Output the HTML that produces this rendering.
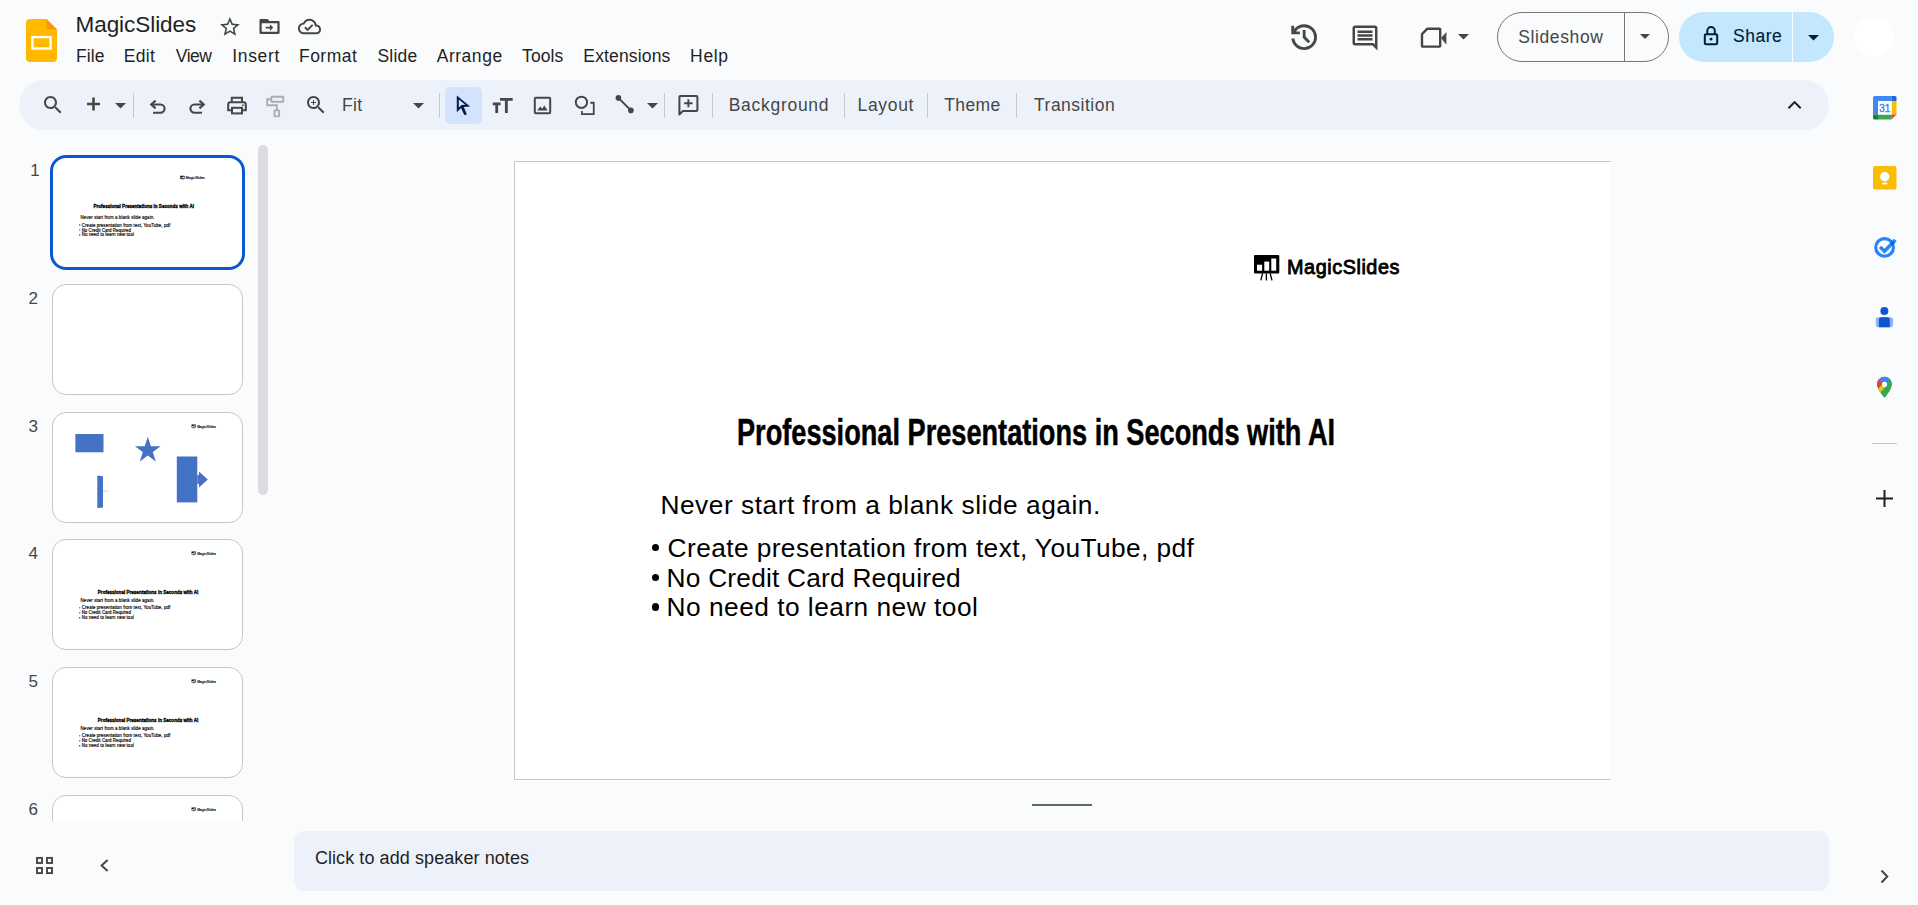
<!DOCTYPE html>
<html><head><meta charset="utf-8"><title>MagicSlides</title>
<style>
html,body{margin:0;padding:0;}
body{width:1918px;height:905px;overflow:hidden;position:relative;background:#f9fbfd;font-family:"Liberation Sans", sans-serif;}
.a{position:absolute;box-sizing:content-box;}
.t{position:absolute;white-space:nowrap;}
svg.a{overflow:visible;}
</style></head><body>
<svg class="a" style="left:26px;top:19px;" width="31" height="43" viewBox="0 0 31 43">
<path d="M4 0 H20.5 L31 10.5 V39 Q31 43 27 43 H4 Q0 43 0 39 V4 Q0 0 4 0Z" fill="#ffba00"/>
<path d="M20.5 0 L31 10.5 H20.5Z" fill="#ff9800"/>
<rect x="6.4" y="18.1" width="18.2" height="11.4" fill="none" stroke="#fff" stroke-width="2.3"/>
</svg>
<div class="t" style="left:75.5px;top:14.45px;font-size:22.5px;line-height:22.5px;color:#1f1f1f;letter-spacing:-0.055px;">MagicSlides</div>
<svg class="a" style="left:218.2px;top:14.5px;" width="23.8" height="23.8" viewBox="0 0 24 24"><path fill="#444746" d="M22 9.24l-7.19-.62L12 2 9.19 8.63 2 9.24l5.46 4.73L5.82 21 12 17.27 18.18 21l-1.63-7.03L22 9.24zM12 15.4l-3.76 2.27 1-4.28-3.32-2.88 4.38-.38L12 6.1l1.71 4.04 4.38.38-3.32 2.88 1 4.28L12 15.4z"/></svg>
<svg class="a" style="left:257px;top:16px;" width="25" height="20" viewBox="0 0 25 20"><path fill-rule="evenodd" fill="#444746" d="M3.6 2.9 H10.4 L12.6 5.1 H21.5 Q22.6 5.1 22.6 6.2 V16.8 Q22.6 17.9 21.5 17.9 H3.6 Q2.5 17.9 2.5 16.8 V4 Q2.5 2.9 3.6 2.9Z M4.7 7.3 H20.4 V15.7 H4.7Z"/><path fill="#444746" d="M8.7 10.7 H12.9 V8.3 L16.2 11.6 L12.9 14.9 V12.5 H8.7Z"/></svg>
<svg class="a" style="left:297px;top:14px;" width="25" height="25" viewBox="-1 -1 26 26"><path fill="#444746" d="M19.35 10.04C18.67 6.59 15.64 4 12 4 9.11 4 6.6 5.64 5.35 8.04 2.34 8.36 0 10.91 0 14c0 3.31 2.69 6 6 6h13c2.76 0 5-2.24 5-5 0-2.64-2.05-4.78-4.65-4.96zM19 18H6c-2.21 0-4-1.79-4-4 0-2.05 1.53-3.76 3.56-3.97l1.07-.11.5-.95C8.08 7.14 9.94 6 12 6c2.62 0 4.88 1.86 5.39 4.43l.3 1.5 1.53.11c1.56.1 2.78 1.41 2.78 2.96 0 1.65-1.35 3-3 3zm-9-3.82l-2.09-2.09L6.5 13.5 10 17l6.01-6.01-1.41-1.41z"/></svg>
<div class="t" style="left:75.9px;top:48.19px;font-size:17.5px;line-height:17.5px;color:#1f1f1f;letter-spacing:0.145px;">File</div>
<div class="t" style="left:123.7px;top:48.19px;font-size:17.5px;line-height:17.5px;color:#1f1f1f;letter-spacing:0.302px;">Edit</div>
<div class="t" style="left:175.8px;top:48.19px;font-size:17.5px;line-height:17.5px;color:#1f1f1f;letter-spacing:-0.492px;">View</div>
<div class="t" style="left:232.3px;top:48.19px;font-size:17.5px;line-height:17.5px;color:#1f1f1f;letter-spacing:0.659px;">Insert</div>
<div class="t" style="left:299px;top:48.19px;font-size:17.5px;line-height:17.5px;color:#1f1f1f;letter-spacing:0.468px;">Format</div>
<div class="t" style="left:377.5px;top:48.19px;font-size:17.5px;line-height:17.5px;color:#1f1f1f;letter-spacing:0.180px;">Slide</div>
<div class="t" style="left:436.7px;top:48.19px;font-size:17.5px;line-height:17.5px;color:#1f1f1f;letter-spacing:0.529px;">Arrange</div>
<div class="t" style="left:522.1px;top:48.19px;font-size:17.5px;line-height:17.5px;color:#1f1f1f;letter-spacing:0.074px;">Tools</div>
<div class="t" style="left:583.3px;top:48.19px;font-size:17.5px;line-height:17.5px;color:#1f1f1f;letter-spacing:0.161px;">Extensions</div>
<div class="t" style="left:690.1px;top:48.19px;font-size:17.5px;line-height:17.5px;color:#1f1f1f;letter-spacing:0.647px;">Help</div>
<svg class="a" style="left:1286.5px;top:20.1px;" width="34.3" height="34.3" viewBox="0 -960 960 960"><path fill="#444746" d="M480-120q-138 0-240.5-91.5T122-440h82q14 104 92.5 172T480-200q117 0 198.5-81.5T760-480q0-117-81.5-198.5T480-760q-69 0-129 32t-101 88h110v80H120v-240h80v94q51-64 124.5-99T480-840q75 0 140.5 28.5t114 77q48.5 48.5 77 114T840-480q0 75-28.5 140.5t-77 114q-48.5 48.5-114 77T480-120Zm112-192L440-464v-216h80v184l128 128-56 56Z"/></svg>
<svg class="a" style="left:1350.4px;top:22.5px;" width="30" height="30" viewBox="0 0 24 24"><path fill="#444746" d="M21.99 4c0-1.1-.89-2-1.99-2H4c-1.1 0-2 .9-2 2v12c0 1.1.9 2 2 2h14l4 4-.01-18zM20 4v13.17L18.83 16H4V4h16zM6 12h12v2H6zm0-3h12v2H6zm0-3h12v2H6z"/></svg>
<svg class="a" style="left:1418.6px;top:25.3px;" width="30" height="25" viewBox="0 0 30 25"><path d="M8.4 3.7 H20.6 Q21.2 3.7 21.2 4.3 V21 Q21.2 21.6 20.6 21.6 H3.6 Q3 21.6 3 21 V9.2Z" fill="none" stroke="#444746" stroke-width="2.4" stroke-linejoin="round"/><path d="M22 13 L27.4 7 V19.8Z" fill="#444746"/></svg>
<svg class="a" style="left:1457.6px;top:33.6px;" width="11" height="6" viewBox="0 0 11 6"><path d="M0 0 H11 L5.5 5.5Z" fill="#444746"/></svg>
<div class="a" style="left:1497px;top:12px;width:170px;height:48px;border:1.25px solid #747775;border-radius:25px;"></div>
<div class="a" style="left:1624px;top:13px;width:1.25px;height:48px;background:#747775;"></div>
<div class="t" style="left:1518.2px;top:29.29px;font-size:17.5px;line-height:17.5px;color:#444746;letter-spacing:0.621px;">Slideshow</div>
<svg class="a" style="left:1640px;top:34px;" width="10" height="5" viewBox="0 0 10 5"><path d="M0 0 H10 L5 5Z" fill="#444746"/></svg>
<div class="a" style="left:1679px;top:12px;width:155px;height:50px;border-radius:25px;background:#c2e7ff;"></div>
<div class="a" style="left:1792px;top:12px;width:1px;height:50px;background:#f9fbfd;"></div>
<svg class="a" style="left:1702px;top:24px;" width="18" height="22" viewBox="0 0 18 22"><path d="M5.3 10.3 V6.75 A3.75 3.75 0 0 1 12.8 6.75 V10.3" fill="none" stroke="#001d35" stroke-width="2"/><rect x="2.8" y="10.3" width="12.4" height="9.9" rx="1.3" fill="none" stroke="#001d35" stroke-width="2"/><circle cx="9" cy="15.2" r="1.4" fill="#001d35"/></svg>
<div class="t" style="left:1733.1px;top:28.09px;font-size:17.5px;line-height:17.5px;color:#001d35;-webkit-text-stroke:0.12px #001d35;letter-spacing:0.484px;">Share</div>
<svg class="a" style="left:1807.5px;top:34.5px;" width="11" height="6" viewBox="0 0 11 6"><path d="M0 0 H11 L5.5 5.5Z" fill="#001d35"/></svg>
<div class="a" style="left:1854px;top:17px;width:40px;height:40px;border-radius:50%;background:#fff;"></div>
<div class="a" style="left:19px;top:80px;width:1810px;height:50px;border-radius:25px;background:#edf2fa;"></div>
<svg class="a" style="left:40.8px;top:93px;" width="24" height="24" viewBox="0 0 24 24"><path fill="#444746" d="M15.5 14h-.79l-.28-.27C15.41 12.59 16 11.11 16 9.5 16 5.91 13.09 3 9.5 3S3 5.91 3 9.5 5.91 16 9.5 16c1.61 0 3.09-.59 4.23-1.57l.27.28v.79l5 4.99L20.49 19l-4.99-5zm-6 0C7.01 14 5 11.99 5 9.5S7.01 5 9.5 5 14 7.01 14 9.5 11.99 14 9.5 14z"/></svg>
<svg class="a" style="left:85px;top:95px;" width="17" height="17" viewBox="0 0 17 17"><path d="M8.5 2.5 V15.5 M2 9 H15" stroke="#444746" stroke-width="2.6"/></svg>
<svg class="a" style="left:115px;top:102.5px;" width="11" height="6" viewBox="0 0 11 6"><path d="M0 0 H11 L5.5 5.5Z" fill="#444746"/></svg>
<div class="a" style="left:133px;top:93px;width:1px;height:25px;background:#c7c7c7;"></div>
<div class="a" style="left:439px;top:93px;width:1px;height:25px;background:#c7c7c7;"></div>
<div class="a" style="left:664px;top:93px;width:1px;height:25px;background:#c7c7c7;"></div>
<div class="a" style="left:712px;top:93px;width:1px;height:25px;background:#c7c7c7;"></div>
<div class="a" style="left:844px;top:93px;width:1px;height:25px;background:#c7c7c7;"></div>
<div class="a" style="left:927px;top:93px;width:1px;height:25px;background:#c7c7c7;"></div>
<div class="a" style="left:1016px;top:93px;width:1px;height:25px;background:#c7c7c7;"></div>
<svg class="a" style="left:148px;top:97px;" width="20" height="18" viewBox="0 0 20 18"><path d="M3.2 7.5 H12.5 A4.1 4.1 0 0 1 12.5 15.7 H5" fill="none" stroke="#444746" stroke-width="2.1"/><path d="M7.6 3.6 L3.2 7.5 L7.6 11.4" fill="none" stroke="#444746" stroke-width="2.1"/></svg>
<svg class="a" style="left:187px;top:97px;" width="20" height="18" viewBox="0 0 20 18"><path d="M16.8 7.5 H7.5 A4.1 4.1 0 0 0 7.5 15.7 H15" fill="none" stroke="#444746" stroke-width="2.1"/><path d="M12.4 3.6 L16.8 7.5 L12.4 11.4" fill="none" stroke="#444746" stroke-width="2.1"/></svg>
<svg class="a" style="left:226px;top:96px;" width="22" height="19" viewBox="0 0 22 19"><path d="M5.8 5.8 V1.8 H16 V5.8" fill="none" stroke="#444746" stroke-width="2"/><path d="M5 14.2 H2.2 V8.4 Q2.2 6.3 4.3 6.3 H17.7 Q19.8 6.3 19.8 8.4 V14.2 H17" fill="none" stroke="#444746" stroke-width="2"/><rect x="6" y="11.8" width="10" height="5.6" fill="none" stroke="#444746" stroke-width="2"/><circle cx="17" cy="9.2" r="0.9" fill="#444746"/></svg>
<svg class="a" style="left:264px;top:95px;" width="22" height="23" viewBox="0 0 22 23"><rect x="7.3" y="1.8" width="12" height="5" rx="0.6" fill="none" stroke="#a9acb0" stroke-width="1.9"/><path d="M7.3 4.3 H3.2 V10.2 H12.8 V15.2" fill="none" stroke="#a9acb0" stroke-width="1.9"/><rect x="10.5" y="15.4" width="4.6" height="6" rx="0.5" fill="none" stroke="#a9acb0" stroke-width="1.9"/></svg>
<svg class="a" style="left:303.7px;top:93px;" width="24" height="24" viewBox="0 0 24 24"><path fill="#444746" d="M15.5 14h-.79l-.28-.27C15.41 12.59 16 11.11 16 9.5 16 5.91 13.09 3 9.5 3S3 5.91 3 9.5 5.91 16 9.5 16c1.61 0 3.09-.59 4.23-1.57l.27.28v.79l5 4.99L20.49 19l-4.99-5zm-6 0C7.01 14 5 11.99 5 9.5S7.01 5 9.5 5 14 7.01 14 9.5 11.99 14 9.5 14zm2.5-4h-2v2H9v-2H7V9h2V7h1v2h2v1z"/></svg>
<div class="t" style="left:341.9px;top:97.49px;font-size:17.5px;line-height:17.5px;color:#444746;letter-spacing:0.411px;">Fit</div>
<svg class="a" style="left:412.5px;top:103px;" width="11" height="6" viewBox="0 0 11 6"><path d="M0 0 H11 L5.5 5.5Z" fill="#444746"/></svg>
<div class="a" style="left:445px;top:87px;width:37px;height:37px;border-radius:5px;background:#d3e3fd;"></div>
<svg class="a" style="left:450px;top:90px;" width="26" height="30" viewBox="0 0 26 30"><path fill-rule="evenodd" fill="#041e49" d="M6.8 5.6 L20.1 16.6 L13.8 16.9 L16.9 24.5 L14.3 24.9 L11 17.9 L6.8 22.2Z M8.8 9.6 L15.3 14.8 L11.6 15 L8.8 17.4Z"/></svg>
<svg class="a" style="left:492px;top:97px;" width="22" height="17" viewBox="0 0 22 17"><path d="M0.8 6.9 H8.6 M4.7 6.9 V16" stroke="#444746" stroke-width="2.8"/><path d="M8 2.3 H20.7 M14.35 2.3 V16" stroke="#444746" stroke-width="2.8"/></svg>
<svg class="a" style="left:533px;top:96px;" width="19" height="19" viewBox="0 0 19 19"><rect x="1.8" y="1.8" width="15.4" height="15.4" rx="1" fill="none" stroke="#444746" stroke-width="2"/><path d="M4.3 14.6 L7.2 10.6 L9.2 12.8 L11.3 9.6 L14.6 14.6Z" fill="#444746"/></svg>
<svg class="a" style="left:573px;top:94px;" width="23" height="23" viewBox="0 0 23 23"><circle cx="8.45" cy="8.3" r="5.65" fill="none" stroke="#444746" stroke-width="2"/><path d="M17.3 8.75 H20.75 V20.15 H8.9 V17" fill="none" stroke="#444746" stroke-width="1.8" stroke-linejoin="round"/></svg>
<svg class="a" style="left:614px;top:93px;" width="22" height="22" viewBox="0 0 22 22"><path d="M4.4 4.9 L16.9 17.4" stroke="#444746" stroke-width="2"/><circle cx="4.4" cy="4.9" r="2.8" fill="#444746"/><circle cx="16.9" cy="17.4" r="2.8" fill="#444746"/></svg>
<svg class="a" style="left:646.5px;top:103px;" width="11" height="6" viewBox="0 0 11 6"><path d="M0 0 H11 L5.5 5.5Z" fill="#444746"/></svg>
<svg class="a" style="left:676px;top:93px;" width="25" height="24" viewBox="0 0 25 24"><path d="M3.4 21.5 V4.1 Q3.4 3.1 4.4 3.1 H20.4 Q21.4 3.1 21.4 4.1 V16.9 Q21.4 17.9 20.4 17.9 H7Z" fill="none" stroke="#444746" stroke-width="2" stroke-linejoin="round"/><path d="M12.4 6.2 V14.3 M8.2 10.3 H16.6" stroke="#444746" stroke-width="1.9"/></svg>
<div class="t" style="left:728.7px;top:97.49px;font-size:17.5px;line-height:17.5px;color:#444746;letter-spacing:0.715px;">Background</div>
<div class="t" style="left:857.5px;top:97.49px;font-size:17.5px;line-height:17.5px;color:#444746;letter-spacing:0.684px;">Layout</div>
<div class="t" style="left:944.3px;top:97.49px;font-size:17.5px;line-height:17.5px;color:#444746;letter-spacing:0.367px;">Theme</div>
<div class="t" style="left:1034px;top:97.49px;font-size:17.5px;line-height:17.5px;color:#444746;letter-spacing:0.505px;">Transition</div>
<svg class="a" style="left:1786px;top:99px;" width="17" height="12" viewBox="0 0 17 12"><path d="M2.5 9.2 L8.6 3.1 L14.7 9.2" fill="none" stroke="#1f1f1f" stroke-width="2"/></svg>
<svg class="a" style="left:1872.5px;top:95.5px;" width="23.5" height="23.5" viewBox="0 0 23.5 23.5">
<path d="M1.6 0 H18.5 V5 H5 V18.5 H0 V1.6 Q0 0 1.6 0Z" fill="#4285f4"/>
<path d="M18.5 0 H21.9 Q23.5 0 23.5 1.6 V5 H18.5Z" fill="#1967d2"/>
<path d="M18.5 5 H23.5 V18.5 H18.5Z" fill="#fbbc04"/>
<path d="M5 18.5 H18.5 V23.5 H5Z" fill="#34a853"/>
<path d="M0 18.5 H5 V23.5 H1.6 Q0 23.5 0 21.9Z" fill="#188038"/>
<path d="M18.5 18.5 H23.5 L18.5 23.5Z" fill="#ea4335"/>
<rect x="5" y="5" width="13.5" height="13.5" fill="#fff"/>
<text x="11.8" y="15.8" font-family="Liberation Sans" font-size="10" fill="#4285f4" stroke="#4285f4" stroke-width="0.4" text-anchor="middle">31</text>
</svg>
<svg class="a" style="left:1872.5px;top:165.5px;" width="23.5" height="23.5" viewBox="0 0 23.5 23.5"><rect width="23.5" height="23.5" rx="2.2" fill="#fbbc04"/><circle cx="11.7" cy="10.8" r="4.7" fill="#fff"/><rect x="9.2" y="16.6" width="5" height="1.8" fill="#fff"/></svg>
<svg class="a" style="left:1872px;top:236px;" width="25" height="24" viewBox="0 0 25 24"><circle cx="12.6" cy="11.4" r="8.85" fill="none" stroke="#2684fc" stroke-width="3.2"/><path d="M8.1 10.9 L12.4 15.3 L23.4 4.1" fill="none" stroke="#2684fc" stroke-width="3.5"/><path d="M19.2 8.3 L21.6 5.9" fill="none" stroke="#0066da" stroke-width="3.5"/></svg>
<svg class="a" style="left:1875px;top:306px;" width="19" height="22" viewBox="0 0 19 22"><circle cx="9.35" cy="5.1" r="4" fill="#0b57d0"/><path d="M0.8 14 Q0.8 11.2 3.6 11.2 H15.3 Q18.1 11.2 18.1 14 V18.4 Q18.1 21.2 15.3 21.2 H3.6 Q0.8 21.2 0.8 18.4Z" fill="#8fb3f5"/><path d="M3.9 14 Q3.9 11.2 6.7 11.2 H12 Q14.8 11.2 14.8 14 V21.2 H3.9Z" fill="#0b57d0"/></svg>
<svg class="a" style="left:1876px;top:376px;" width="17" height="23" viewBox="0 0 17 23">
<path d="M8.5 0.8 C4.3 0.8 1 4 1 8.2 C1 13.5 8.5 21.8 8.5 21.8 C8.5 21.8 16 13.5 16 8.2 C16 4 12.7 0.8 8.5 0.8Z" fill="#34a853"/>
<path d="M3 3.3 C1.8 4.6 1 6.3 1 8.2 C1 9.6 1.5 11.1 2.3 12.6 L8.5 6Z" fill="#ea4335"/>
<path d="M3 3.3 C4.4 1.7 6.3 0.8 8.5 0.8 C10.8 0.8 12.7 1.8 14 3.4 L8.5 8.7Z" fill="#4285f4"/>
<path d="M2.3 12.6 C3 13.9 3.8 15.1 4.6 16.2 L10.8 9.6 L8.5 6.5Z" fill="#fbbc04"/>
<circle cx="8.5" cy="8.3" r="2.6" fill="#fff"/>
</svg>
<div class="a" style="left:1872px;top:443px;width:25px;height:1px;background:#c7c7c7;"></div>
<svg class="a" style="left:1875px;top:489px;" width="19" height="19" viewBox="0 0 19 19"><path d="M9.5 1 V18 M1 9.5 H18" stroke="#1f1f1f" stroke-width="2"/></svg>
<svg class="a" style="left:1878px;top:868px;" width="13" height="17" viewBox="0 0 13 17"><path d="M3.5 2.5 L9.3 8.5 L3.5 14.5" fill="none" stroke="#444746" stroke-width="2"/></svg>
<div class="a" style="left:258px;top:145px;width:10px;height:350px;border-radius:5px;background:#dadce0;"></div>
<div class="a" style="left:0;top:0;width:256px;height:821px;overflow:hidden;"><div class="t" style="left:30.2px;top:162.41px;font-size:17px;line-height:17px;color:#444746;">1</div>
<div class="a" style="left:50.3px;top:154.70px;width:189px;height:109px;border:3px solid #0b57d0;border-radius:16px;background:#fff;overflow:hidden;"><div class="a" style="left:2.30px;top:2.10px;width:1096px;height:618px;transform:scale(0.168);transform-origin:0 0;"><svg class="a" style="left:739.9px;top:93.5px" width="27" height="26" viewBox="0 0 27 26"><rect x="0" y="0" width="25.3" height="18.5" rx="1" fill="#000"/><rect x="3" y="9.7" width="5.1" height="6" fill="#fff"/><rect x="10.3" y="6.6" width="4.9" height="9.1" fill="#fff"/><rect x="17.3" y="3.5" width="4.9" height="12.2" fill="#fff"/><path d="M8.6 18.5 L6.8 25.4 M12.4 18.5 V25.4 M16.2 18.5 L18 25.4" stroke="#000" stroke-width="1.3"/></svg><div class="t" style="left:773.00px;top:97.24px;font-size:19.8px;line-height:19.8px;color:#000;-webkit-text-stroke:0.85px #000;letter-spacing:0.575px;">MagicSlides</div><div class="t" style="left:222.52px;top:253.55px;font-size:36.8px;line-height:36.8px;font-weight:bold;color:#000;transform:scaleX(0.7380);transform-origin:0 0;-webkit-text-stroke:2.2px #000;">Professional Presentations in Seconds with AI</div><div class="t" style="left:146.40px;top:330.94px;font-size:26.3px;line-height:26.3px;color:#000;-webkit-text-stroke:0.9px #000;letter-spacing:0.527px;">Never start from a blank slide again.</div><div class="a" style="left:138px;top:383.00px;width:7.4px;height:7.4px;border-radius:50%;background:#000;"></div><div class="t" style="left:153.60px;top:373.84px;font-size:26.3px;line-height:26.3px;color:#000;-webkit-text-stroke:0.9px #000;letter-spacing:0.405px;">Create presentation from text, YouTube, pdf</div><div class="a" style="left:138px;top:412.80px;width:7.4px;height:7.4px;border-radius:50%;background:#000;"></div><div class="t" style="left:152.60px;top:403.64px;font-size:26.3px;line-height:26.3px;color:#000;-webkit-text-stroke:0.9px #000;letter-spacing:0.210px;">No Credit Card Required</div><div class="a" style="left:138px;top:442.20px;width:7.4px;height:7.4px;border-radius:50%;background:#000;"></div><div class="t" style="left:152.60px;top:433.04px;font-size:26.3px;line-height:26.3px;color:#000;-webkit-text-stroke:0.9px #000;letter-spacing:0.481px;">No need to learn new tool</div></div></div>
<div class="t" style="left:28.5px;top:290.21px;font-size:17px;line-height:17px;color:#444746;">2</div>
<div class="a" style="left:52.2px;top:284.30px;width:189px;height:109.2px;border:1px solid #c4c7c5;border-radius:14px;background:#fff;overflow:hidden;"></div>
<div class="t" style="left:28.5px;top:418.11px;font-size:17px;line-height:17px;color:#444746;">3</div>
<div class="a" style="left:52.2px;top:412.20px;width:189px;height:109.2px;border:1px solid #c4c7c5;border-radius:14px;background:#fff;overflow:hidden;"><div class="a" style="left:2.40px;top:2.30px;width:1096px;height:618px;transform:scale(0.168);transform-origin:0 0;"><svg class="a" style="left:807px;top:56px" width="27" height="26" viewBox="0 0 27 26"><rect x="0" y="0" width="25.3" height="18.5" rx="1" fill="#000"/><rect x="3" y="9.7" width="5.1" height="6" fill="#fff"/><rect x="10.3" y="6.6" width="4.9" height="9.1" fill="#fff"/><rect x="17.3" y="3.5" width="4.9" height="12.2" fill="#fff"/><path d="M8.6 18.5 L6.8 25.4 M12.4 18.5 V25.4 M16.2 18.5 L18 25.4" stroke="#000" stroke-width="1.3"/></svg><div class="t" style="left:840.10px;top:59.74px;font-size:19.8px;line-height:19.8px;color:#000;-webkit-text-stroke:0.85px #000;letter-spacing:0.575px;">MagicSlides</div></div><svg class="a" style="left:0;top:0" width="189" height="110" viewBox="0 0 189 110"><rect x="22.4" y="21" width="28.1" height="18.3" fill="#4472c4"/><path d="M94.8 23.8 L97.9 33.2 L107.7 33.2 L99.8 39 L102.8 48.4 L94.8 42.6 L86.8 48.4 L89.8 39 L81.9 33.2 L91.7 33.2Z" fill="#4472c4"/><path d="M44.3 62.6 L50 63.2 V94.4 L44.3 95Z" fill="#4472c4"/><path d="M50 78 H55" stroke="#9db0d8" stroke-width="0.6"/><rect x="123.8" y="43.5" width="20.5" height="45.9" fill="#4472c4"/><path d="M144.3 62 H146 V58.5 L154.8 66.5 L146 74.5 V71 H144.3Z" fill="#4472c4"/></svg></div>
<div class="t" style="left:28.5px;top:545.01px;font-size:17px;line-height:17px;color:#444746;">4</div>
<div class="a" style="left:52.2px;top:539.10px;width:189px;height:109.2px;border:1px solid #c4c7c5;border-radius:14px;background:#fff;overflow:hidden;"><div class="a" style="left:2.40px;top:2.30px;width:1096px;height:618px;transform:scale(0.168);transform-origin:0 0;"><svg class="a" style="left:807px;top:56px" width="27" height="26" viewBox="0 0 27 26"><rect x="0" y="0" width="25.3" height="18.5" rx="1" fill="#000"/><rect x="3" y="9.7" width="5.1" height="6" fill="#fff"/><rect x="10.3" y="6.6" width="4.9" height="9.1" fill="#fff"/><rect x="17.3" y="3.5" width="4.9" height="12.2" fill="#fff"/><path d="M8.6 18.5 L6.8 25.4 M12.4 18.5 V25.4 M16.2 18.5 L18 25.4" stroke="#000" stroke-width="1.3"/></svg><div class="t" style="left:840.10px;top:59.74px;font-size:19.8px;line-height:19.8px;color:#000;-webkit-text-stroke:0.85px #000;letter-spacing:0.575px;">MagicSlides</div><div class="t" style="left:249.12px;top:278.55px;font-size:36.8px;line-height:36.8px;font-weight:bold;color:#000;transform:scaleX(0.7380);transform-origin:0 0;-webkit-text-stroke:2.2px #000;">Professional Presentations in Seconds with AI</div><div class="t" style="left:146.40px;top:335.94px;font-size:26.3px;line-height:26.3px;color:#000;-webkit-text-stroke:0.9px #000;letter-spacing:0.527px;">Never start from a blank slide again.</div><div class="a" style="left:138px;top:388.00px;width:7.4px;height:7.4px;border-radius:50%;background:#000;"></div><div class="t" style="left:153.60px;top:378.84px;font-size:26.3px;line-height:26.3px;color:#000;-webkit-text-stroke:0.9px #000;letter-spacing:0.405px;">Create presentation from text, YouTube, pdf</div><div class="a" style="left:138px;top:417.80px;width:7.4px;height:7.4px;border-radius:50%;background:#000;"></div><div class="t" style="left:152.60px;top:408.64px;font-size:26.3px;line-height:26.3px;color:#000;-webkit-text-stroke:0.9px #000;letter-spacing:0.210px;">No Credit Card Required</div><div class="a" style="left:138px;top:447.20px;width:7.4px;height:7.4px;border-radius:50%;background:#000;"></div><div class="t" style="left:152.60px;top:438.04px;font-size:26.3px;line-height:26.3px;color:#000;-webkit-text-stroke:0.9px #000;letter-spacing:0.481px;">No need to learn new tool</div></div></div>
<div class="t" style="left:28.5px;top:672.91px;font-size:17px;line-height:17px;color:#444746;">5</div>
<div class="a" style="left:52.2px;top:667.00px;width:189px;height:109.2px;border:1px solid #c4c7c5;border-radius:14px;background:#fff;overflow:hidden;"><div class="a" style="left:2.40px;top:2.30px;width:1096px;height:618px;transform:scale(0.168);transform-origin:0 0;"><svg class="a" style="left:807px;top:56px" width="27" height="26" viewBox="0 0 27 26"><rect x="0" y="0" width="25.3" height="18.5" rx="1" fill="#000"/><rect x="3" y="9.7" width="5.1" height="6" fill="#fff"/><rect x="10.3" y="6.6" width="4.9" height="9.1" fill="#fff"/><rect x="17.3" y="3.5" width="4.9" height="12.2" fill="#fff"/><path d="M8.6 18.5 L6.8 25.4 M12.4 18.5 V25.4 M16.2 18.5 L18 25.4" stroke="#000" stroke-width="1.3"/></svg><div class="t" style="left:840.10px;top:59.74px;font-size:19.8px;line-height:19.8px;color:#000;-webkit-text-stroke:0.85px #000;letter-spacing:0.575px;">MagicSlides</div><div class="t" style="left:249.12px;top:278.55px;font-size:36.8px;line-height:36.8px;font-weight:bold;color:#000;transform:scaleX(0.7380);transform-origin:0 0;-webkit-text-stroke:2.2px #000;">Professional Presentations in Seconds with AI</div><div class="t" style="left:146.40px;top:335.94px;font-size:26.3px;line-height:26.3px;color:#000;-webkit-text-stroke:0.9px #000;letter-spacing:0.527px;">Never start from a blank slide again.</div><div class="a" style="left:138px;top:388.00px;width:7.4px;height:7.4px;border-radius:50%;background:#000;"></div><div class="t" style="left:153.60px;top:378.84px;font-size:26.3px;line-height:26.3px;color:#000;-webkit-text-stroke:0.9px #000;letter-spacing:0.405px;">Create presentation from text, YouTube, pdf</div><div class="a" style="left:138px;top:417.80px;width:7.4px;height:7.4px;border-radius:50%;background:#000;"></div><div class="t" style="left:152.60px;top:408.64px;font-size:26.3px;line-height:26.3px;color:#000;-webkit-text-stroke:0.9px #000;letter-spacing:0.210px;">No Credit Card Required</div><div class="a" style="left:138px;top:447.20px;width:7.4px;height:7.4px;border-radius:50%;background:#000;"></div><div class="t" style="left:152.60px;top:438.04px;font-size:26.3px;line-height:26.3px;color:#000;-webkit-text-stroke:0.9px #000;letter-spacing:0.481px;">No need to learn new tool</div></div></div>
<div class="t" style="left:28.5px;top:800.51px;font-size:17px;line-height:17px;color:#444746;">6</div>
<div class="a" style="left:52.2px;top:794.60px;width:189px;height:109.2px;border:1px solid #c4c7c5;border-radius:14px;background:#fff;overflow:hidden;"><div class="a" style="left:2.40px;top:2.30px;width:1096px;height:618px;transform:scale(0.168);transform-origin:0 0;"><svg class="a" style="left:807px;top:56px" width="27" height="26" viewBox="0 0 27 26"><rect x="0" y="0" width="25.3" height="18.5" rx="1" fill="#000"/><rect x="3" y="9.7" width="5.1" height="6" fill="#fff"/><rect x="10.3" y="6.6" width="4.9" height="9.1" fill="#fff"/><rect x="17.3" y="3.5" width="4.9" height="12.2" fill="#fff"/><path d="M8.6 18.5 L6.8 25.4 M12.4 18.5 V25.4 M16.2 18.5 L18 25.4" stroke="#000" stroke-width="1.3"/></svg><div class="t" style="left:840.10px;top:59.74px;font-size:19.8px;line-height:19.8px;color:#000;-webkit-text-stroke:0.85px #000;letter-spacing:0.575px;">MagicSlides</div><div class="t" style="left:249.12px;top:278.55px;font-size:36.8px;line-height:36.8px;font-weight:bold;color:#000;transform:scaleX(0.7380);transform-origin:0 0;-webkit-text-stroke:2.2px #000;">Professional Presentations in Seconds with AI</div><div class="t" style="left:146.40px;top:335.94px;font-size:26.3px;line-height:26.3px;color:#000;-webkit-text-stroke:0.9px #000;letter-spacing:0.527px;">Never start from a blank slide again.</div><div class="a" style="left:138px;top:388.00px;width:7.4px;height:7.4px;border-radius:50%;background:#000;"></div><div class="t" style="left:153.60px;top:378.84px;font-size:26.3px;line-height:26.3px;color:#000;-webkit-text-stroke:0.9px #000;letter-spacing:0.405px;">Create presentation from text, YouTube, pdf</div><div class="a" style="left:138px;top:417.80px;width:7.4px;height:7.4px;border-radius:50%;background:#000;"></div><div class="t" style="left:152.60px;top:408.64px;font-size:26.3px;line-height:26.3px;color:#000;-webkit-text-stroke:0.9px #000;letter-spacing:0.210px;">No Credit Card Required</div><div class="a" style="left:138px;top:447.20px;width:7.4px;height:7.4px;border-radius:50%;background:#000;"></div><div class="t" style="left:152.60px;top:438.04px;font-size:26.3px;line-height:26.3px;color:#000;-webkit-text-stroke:0.9px #000;letter-spacing:0.481px;">No need to learn new tool</div></div></div>
</div>
<svg class="a" style="left:34px;top:855px;" width="21" height="21" viewBox="0 0 21 21"><rect x="3" y="2.9" width="5" height="5.1" fill="none" stroke="#444746" stroke-width="1.9"/><rect x="13" y="2.9" width="5" height="5.1" fill="none" stroke="#444746" stroke-width="1.9"/><rect x="3" y="13" width="5" height="5.1" fill="none" stroke="#444746" stroke-width="1.9"/><rect x="13" y="13" width="5" height="5.1" fill="none" stroke="#444746" stroke-width="1.9"/></svg>
<svg class="a" style="left:98px;top:857px;" width="13" height="17" viewBox="0 0 13 17"><path d="M9.6 2.9 L3.6 8.5 L9.6 14.1" fill="none" stroke="#444746" stroke-width="2"/></svg>
<div class="a" style="left:513px;top:160px;width:1098px;height:621px;background:#fdfefe;"></div>
<div class="a" style="left:514px;top:161px;width:1096px;height:617px;background:#fff;border-left:1px solid #c4c7c5;border-top:1px solid #c4c7c5;border-bottom:1px solid #c4c7c5;"></div>
<div class="a" style="left:514px;top:161px;width:1096px;height:618px;"><svg class="a" style="left:739.9px;top:93.5px" width="27" height="26" viewBox="0 0 27 26"><rect x="0" y="0" width="25.3" height="18.5" rx="1" fill="#000"/><rect x="3" y="9.7" width="5.1" height="6" fill="#fff"/><rect x="10.3" y="6.6" width="4.9" height="9.1" fill="#fff"/><rect x="17.3" y="3.5" width="4.9" height="12.2" fill="#fff"/><path d="M8.6 18.5 L6.8 25.4 M12.4 18.5 V25.4 M16.2 18.5 L18 25.4" stroke="#000" stroke-width="1.3"/></svg><div class="t" style="left:773.00px;top:97.24px;font-size:19.8px;line-height:19.8px;color:#000;-webkit-text-stroke:0.85px #000;letter-spacing:0.575px;">MagicSlides</div><div class="t" style="left:222.52px;top:253.55px;font-size:36.8px;line-height:36.8px;font-weight:bold;color:#000;transform:scaleX(0.7380);transform-origin:0 0;-webkit-text-stroke:0.5px #000;">Professional Presentations in Seconds with AI</div><div class="t" style="left:146.40px;top:330.94px;font-size:26.3px;line-height:26.3px;color:#000;letter-spacing:0.527px;">Never start from a blank slide again.</div><div class="a" style="left:138px;top:383.00px;width:7.4px;height:7.4px;border-radius:50%;background:#000;"></div><div class="t" style="left:153.60px;top:373.84px;font-size:26.3px;line-height:26.3px;color:#000;letter-spacing:0.405px;">Create presentation from text, YouTube, pdf</div><div class="a" style="left:138px;top:412.80px;width:7.4px;height:7.4px;border-radius:50%;background:#000;"></div><div class="t" style="left:152.60px;top:403.64px;font-size:26.3px;line-height:26.3px;color:#000;letter-spacing:0.210px;">No Credit Card Required</div><div class="a" style="left:138px;top:442.20px;width:7.4px;height:7.4px;border-radius:50%;background:#000;"></div><div class="t" style="left:152.60px;top:433.04px;font-size:26.3px;line-height:26.3px;color:#000;letter-spacing:0.481px;">No need to learn new tool</div></div>
<div class="a" style="left:1032px;top:804px;width:60px;height:2px;background:#646866;"></div>
<div class="a" style="left:294px;top:831px;width:1535px;height:60px;border-radius:10px;background:#edf2fa;"></div>
<div class="t" style="left:314.9px;top:848.56px;font-size:18px;line-height:18px;color:#1f1f1f;letter-spacing:0.079px;">Click to add speaker notes</div>

</body></html>
